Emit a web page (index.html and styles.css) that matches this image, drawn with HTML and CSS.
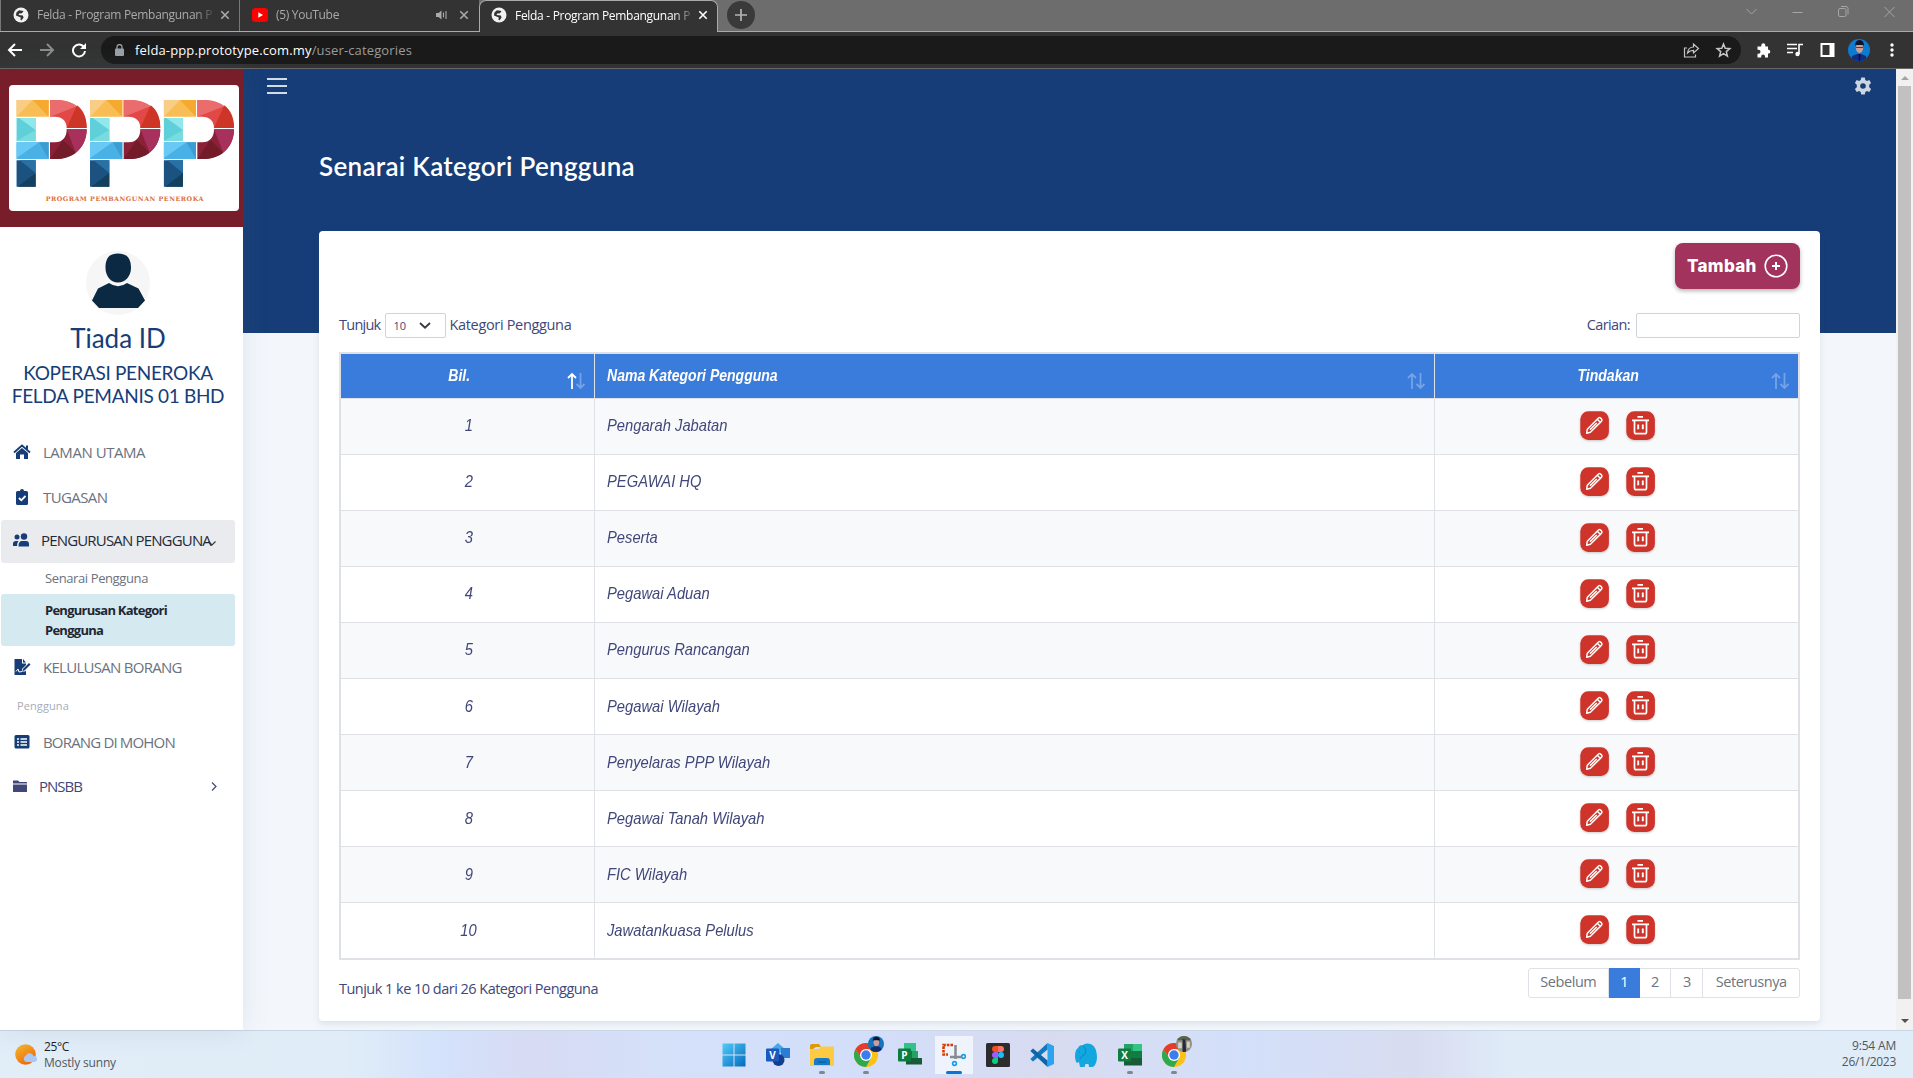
FILE: index.html
```html
<!DOCTYPE html>
<html lang="ms">
<head>
<meta charset="utf-8">
<title>Felda - Program Pembangunan Peneroka</title>
<link rel="stylesheet" href="styles.css">
</head>
<body>
<svg class="defs" width="0" height="0" aria-hidden="true">
  <symbol id="globe" viewBox="0 0 16 16"><circle cx="8" cy="8" r="7.5" fill="#f1f1f1"/><path d="M6 3.2 10.5 4 9 6.2 6.2 6.6 5.5 8 9.8 8.4 10.6 10.4 8.4 13.4 7.4 12.6 7.8 10.6 3 8.4 3.4 5.6z" fill="#333"/></symbol>
  <symbol id="x" viewBox="0 0 10 10"><path d="M1.3 1.3l7.4 7.4M8.7 1.3L1.3 8.7" stroke="currentColor" stroke-width="1.6"/></symbol>
  <symbol id="edit" viewBox="0 0 29 29"><rect x=".3" y=".3" width="28.6" height="28.6" rx="8" fill="#cf342b"/><path d="M6.700 22.200l.6-4L18.500 7q1.100-.9 2.100.1l.9.9q1 1 .1 2.100L10.400 21.300zM17.300 8.300l3 3M10 18.800l6.800-6.800" fill="none" stroke="#fff" stroke-width="1.500" stroke-linejoin="round"/></symbol>
  <symbol id="trash" viewBox="0 0 29 29"><rect x=".3" y=".3" width="28.6" height="28.6" rx="8" fill="#cf342b"/><path d="M6 9.300h17M11.500 5.900h5.500M8.500 9.600v11.400q0 1.700 1.800 1.700h8.400q1.800 0 1.800-1.700V9.600" fill="none" stroke="#fff" stroke-width="1.700"/><path d="M12.200 13.600v4.600M16.800 13.600v4.600" stroke="#fff" stroke-width="1.900"/></symbol>
  <symbol id="sort" viewBox="0 0 18 18"><path d="M5 17V2M1 6l4-4 4 4" fill="none" stroke="#fff" stroke-width="1.8"/><path d="M13.5 1v15M9.5 12l4 4 4-4" fill="none" stroke="#fff" stroke-width="1.8" opacity=".3"/></symbol>
  <symbol id="sortoff" viewBox="0 0 18 18"><path d="M5 17V2M1 6l4-4 4 4M13.5 1v15M9.5 12l4 4 4-4" fill="none" stroke="#fff" stroke-width="1.8" opacity=".3"/></symbol>
  <symbol id="chrome" viewBox="0 0 24 24"><circle cx="12" cy="12" r="12" fill="#fbc116"/><path d="M1.6 6A12 12 0 0 0 12 24L17 15 7 15z" fill="#2da94f"/><path d="M1.6 6A12 12 0 0 1 22.4 6H12L7 15z" fill="#e33b2e"/><circle cx="12" cy="12" r="6" fill="#fff"/><circle cx="12" cy="12" r="4.7" fill="#3b7ded"/></symbol>
  <symbol id="ppp" viewBox="0 0 212 262">
    <path d="M0 0h97v50H0z" fill="#f8bd55"/><path d="M0 0h49L0 50z" fill="#f9cd86"/><path d="M49 0h48v50z" fill="#f5a92e"/>
    <path d="M101 0h15C175 0 211 32 211 84H151C151 62 137 50 116 50H101z" fill="#e24845"/><path d="M101 0h15c30 0 50 6 66 19L101 50z" fill="#ea6c6d"/><path d="M182 16C202 31 211 54 211 84h-60z" fill="#cd3527"/>
    <path d="M0 54h58v69H0z" fill="#5fd0da"/><path d="M8 54h50v36z" fill="#90e7ec"/><path d="M58 90v33H0z" fill="#77dbe0"/>
    <path d="M0 127h97v50H0z" fill="#49b1e6"/><path d="M0 127h68L0 175z" fill="#67c9f4"/><path d="M68 127h29v50z" fill="#3d9dd3"/>
    <path d="M0 181h58v79H0z" fill="#1b5280"/><path d="M10 181h48v38z" fill="#2771a5"/><path d="M58 219v41H4z" fill="#13405f"/>
    <path d="M151 88h60c0 55-40 89-96 89h-14v-50h15c22 0 35-14 35-39z" fill="#8b2138"/><path d="M151 88h60c0 30-12 54-32 70z" fill="#a8305c"/><path d="M140 120l39 38c-16 12-37 19-63 19h-15z" fill="#731b28"/>
  </symbol>
</svg>

<header class="browser">
  <div class="tabs">
    <div class="tab"><svg class="fav"><use href="#globe"/></svg><span class="tt">Felda - Program Pembangunan P</span><svg class="close"><use href="#x"/></svg></div>
    <div class="tab second"><svg class="fav" viewBox="0 0 16 16"><rect y="1" width="16" height="14" rx="3.5" fill="red"/><path d="M6.300 5.300v5.400L11 8z" fill="#fff"/></svg><span class="tt">(5) YouTube</span><svg class="speaker" viewBox="0 0 12 10"><path d="M0 3h2.500L5.500.5v9L2.500 7H0z" fill="#aaa"/><path d="M7.500 2.500v5M10 1v8" stroke="#aaa" stroke-width="1.1"/></svg><svg class="close"><use href="#x"/></svg></div>
    <div class="tab active"><svg class="fav"><use href="#globe"/></svg><span class="tt">Felda - Program Pembangunan P</span><svg class="close"><use href="#x"/></svg></div>
    <div class="newtab"><svg viewBox="0 0 28 28"><circle cx="14" cy="14" r="14" fill="#3a3a3a"/><path d="M14 8v12M8 14h12" stroke="#b5b5b5" stroke-width="1.7"/></svg></div>
    <svg class="wincontrols" viewBox="0 0 150 12" fill="none" stroke="#a5a5a5" stroke-width="1"><path d="M.5 3l5 5 5-5M46.500 6.500h10M95 .5h5q2 0 2 2v6"/><rect x="92.500" y="2.500" width="7.500" height="8" rx="1.500"/><path d="M138.500 1l10 10M148.500 1l-10 10"/></svg>
  </div>
  <div class="toolbar">
    <svg class="nav" viewBox="0 0 80 16" fill="none" stroke-width="2"><path d="M15 8H2M8 2L2 8l6 6" stroke="#fff"/><path d="M33 8h13M40 2l6 6-6 6" stroke="#8c8c8c"/><path d="M76.500 4.500A6 6 0 1 0 78 9" stroke="#fff"/><path d="M79 1v6h-6z" fill="#fff"/></svg>
    <div class="omnibox"><svg class="lock" viewBox="0 0 9 12"><rect y="4.500" width="9" height="7.500" rx="1" fill="#9aa0a6"/><path d="M2 5V3a2.500 2.500 0 0 1 5 0v2" fill="none" stroke="#9aa0a6" stroke-width="1.300"/></svg><span class="url"><b class="host">felda-ppp.prototype.com.my</b><span class="path">/user-categories</span></span>
      <svg class="share" viewBox="0 0 49 16" fill="none" stroke="#c4c7c5" stroke-width="1.200"><path d="M4 6H1.500v9h11v-2.500M4.500 11c.5-4 3-6 6-6V2L15.500 6.500 10.500 11V8.300c-3 0-4.500 1-6 2.700z"/><path d="M40.500 2l1.700 4.300 4.600.3-3.500 3 1.100 4.500-3.900-2.500-3.900 2.500 1.100-4.500-3.500-3 4.600-.3z" stroke-width="1.500"/></svg>
    </div>
    <svg class="ext" viewBox="0 0 80 16"><path d="M13 4.500h-2.700V3.300a2 2 0 0 0-4 0v1.200H2.500v3.300h1a2 2 0 0 1 0 4h-1v3.700h3.700v-1a1.900 1.900 0 0 1 3.800 0v1h3v-4h1a2 2 0 0 0 0-3.700h-1z" fill="#fff"/><path d="M32 2.500h10M32 6.500h10M32 10.500h6" stroke="#fff" stroke-width="1.600"/><path d="M44 12V2.500h4" stroke="#fff" stroke-width="1.600" fill="none"/><circle cx="42.500" cy="12" r="2.200" fill="#fff"/><path d="M65.500 1h14v14h-14zm2 2v10h7V3z" fill="#fff" fill-rule="evenodd"/></svg>
    <svg class="me" viewBox="0 0 22 22"><defs><clipPath id="c"><circle cx="11" cy="11" r="11"/></clipPath></defs><g clip-path="url(#c)"><path d="M0 0h22v22H0z" fill="#0d7bd0"/><path d="M3 22l1-5 5-2h4l5 2 1 5z" fill="#122c82"/><ellipse cx="11.500" cy="9" rx="3.600" ry="5" fill="#c99f9a"/><path d="M7 7q0-6 4.500-6T16 7l-1-1H8z" fill="#111327"/><path d="M8 8.500h7" stroke="#445"/><path d="M10.500 15h2l-.5 7h-1z" fill="#0a1240"/></g></svg>
    <svg class="dots" viewBox="0 0 4 14" fill="#fff"><circle cx="2" cy="2" r="1.700"/><circle cx="2" cy="7" r="1.700"/><circle cx="2" cy="12" r="1.700"/></svg>
  </div>
</header>

<div class="page">
  <aside class="sidebar">
    <div class="brand">
      <svg class="logo" viewBox="27 75 690 378"><rect x="27" y="75" width="690" height="378" rx="12" fill="#fff"/><use href="#ppp" x="49" y="120" width="212" height="262"/><use href="#ppp" x="270" y="120" width="212" height="262"/><use href="#ppp" x="491" y="120" width="212" height="262"/><text x="137" y="424" textLength="473" class="slogan">PROGRAM PEMBANGUNAN PENEROKA</text></svg>
    </div>
    <div class="profile">
      <svg class="avatar" viewBox="0 0 64 64"><circle cx="32" cy="32" r="32" fill="#f6f6f6"/><path d="M32 2.500c10 0 13 6 13 14.500S39 31.500 32 31.500 19.500 25.500 19.500 17 22 2.500 32 2.500zM23 32q9 6.500 18 0l11.500 5.500 6.500 12-7 7.500H13l-7-7.500 6-12z" fill="#0b2942"/></svg>
      <div class="uid">Tiada ID</div>
      <div class="org">KOPERASI PENEROKA<br>FELDA PEMANIS 01 BHD</div>
    </div>
    <nav class="menu">
      <a class="item i1"><svg viewBox="0 0 18 16"><path d="M9 4l6 5v6h-4v-4.500H7V15H3V9z"/><path d="M1 8.500l8-7 8 7" fill="none" stroke="#163d77" stroke-width="1.800"/><path d="M13 1.500h2V5h-2z"/></svg><span>LAMAN UTAMA</span></a>
      <a class="item i2"><svg viewBox="0 0 18 16"><path d="M4.500 2H7a2 2 0 0 1 4 0h2.500q1.500 0 1.500 1.500v11q0 1.500-1.500 1.500h-9Q3 16 3 14.500v-11Q3 2 4.500 2z"/><path d="M6 9l2.300 2.300L12.500 7" fill="none" stroke="#fff" stroke-width="1.800"/></svg><span>TUGASAN</span></a>
      <a class="item open"><svg viewBox="0 0 18 16"><circle cx="5" cy="5" r="2.500"/><circle cx="12" cy="4.500" r="3.200"/><path d="M1 14v-2.500Q1 9 4 9h2.500Q5 10.500 5 14zM6.500 14.500Q6.500 9 10 9h4q3 0 3 3v2.500z"/></svg><span>PENGURUSAN PENGGUNA</span><svg class="caret" viewBox="0 0 8 5"><path d="M.5.5L4 4 7.500.5" fill="none" stroke="#333" stroke-width="1.100"/></svg></a>
      <a class="sub">Senarai Pengguna</a>
      <a class="sub current">Pengurusan Kategori<br>Pengguna</a>
      <a class="item i3"><svg viewBox="0 0 18 16"><path d="M1.500 0H9v4.500h4V6L9 10v2.500h3l1-1V16H1.500z"/><path d="M10 0l3 3.500h-3z"/><path d="M9.500 12l.5-2L16 4l1.500 1.500-6 6z"/><path d="M3 12.500l2-2.500 1 3 3-.5" fill="none" stroke="#fff"/></svg><span>KELULUSAN BORANG</span></a>
      <div class="group">Pengguna</div>
      <a class="item i4"><svg viewBox="0 0 18 16"><rect x="1.500" y="1" width="15" height="13.500" rx="1.500"/><path d="M4 5h2M7.500 5H14M4 8h2M7.500 8H14M4 11h2M7.500 11H14" stroke="#fff" stroke-width="1.500"/></svg><span>BORANG DI MOHON</span></a>
      <a class="item i5"><svg viewBox="0 0 18 16"><path d="M1 2.500h5L7.500 4H15v1.500H1zM1 6.500h14V14H1z" fill="#414779"/></svg><span>PNSBB</span><svg class="chev" viewBox="0 0 6 9"><path d="M1 .5l4 4-4 4" fill="none" stroke="#414779" stroke-width="1.200"/></svg></a>
    </nav>
  </aside>

  <main class="main">
    <div class="topbar">
      <svg class="burger" viewBox="0 0 20 16"><path d="M0 1h20M0 8h20M0 15h20" stroke="#d3dbe6" stroke-width="1.800"/></svg>
      <svg class="gear" viewBox="0 0 18 18"><path d="M7.200.5h3.600l.5 2.500 1.600.9 2.400-.8 1.800 3-1.900 1.700v2.400l1.900 1.700-1.800 3-2.400-.8-1.600.9-.5 2.500H7.200L6.700 15l-1.600-.9-2.400.8-1.800-3 1.900-1.700V7.800L.9 6.100l1.800-3 2.400.8L6.700 3zM9 6.200a2.800 2.800 0 1 0 0 5.600 2.800 2.800 0 0 0 0-5.600z" fill="#ccd5e2" fill-rule="evenodd"/></svg>
    </div>
    <h1>Senarai Kategori Pengguna</h1>
    <section class="card">
      <button class="add"><span>Tambah</span><svg viewBox="0 0 24 24" fill="none" stroke="#fff"><circle cx="12" cy="12" r="10.800" stroke-width="1.600"/><path d="M12 8v8M8 12h8" stroke-width="2"/></svg></button>
      <div class="controls">
        <label><span class="tight">Tunjuk</span><span class="select"><span>10</span><svg viewBox="0 0 12 7"><path d="M1 1l5 4.700L11 1" fill="none" stroke="#343a40" stroke-width="1.800"/></svg></span><span class="what">Kategori Pengguna</span></label>
        <label class="find"><span class="tight">Carian:</span><input type="text"></label>
      </div>
      <table>
        <colgroup><col class="k1"><col class="k2"><col class="k3"></colgroup>
        <thead><tr><th><span>Bil.</span><svg class="sort"><use href="#sort"/></svg></th><th class="name"><span>Nama Kategori Pengguna</span><svg class="sort"><use href="#sortoff"/></svg></th><th><span>Tindakan</span><svg class="sort"><use href="#sortoff"/></svg></th></tr></thead>
        <tbody>
          <tr><td><span>1</span></td><td class="name"><span>Pengarah Jabatan</span></td><td><svg class="act"><use href="#edit"/></svg><svg class="act"><use href="#trash"/></svg></td></tr>
          <tr><td><span>2</span></td><td class="name"><span>PEGAWAI HQ</span></td><td><svg class="act"><use href="#edit"/></svg><svg class="act"><use href="#trash"/></svg></td></tr>
          <tr><td><span>3</span></td><td class="name"><span>Peserta</span></td><td><svg class="act"><use href="#edit"/></svg><svg class="act"><use href="#trash"/></svg></td></tr>
          <tr><td><span>4</span></td><td class="name"><span>Pegawai Aduan</span></td><td><svg class="act"><use href="#edit"/></svg><svg class="act"><use href="#trash"/></svg></td></tr>
          <tr><td><span>5</span></td><td class="name"><span>Pengurus Rancangan</span></td><td><svg class="act"><use href="#edit"/></svg><svg class="act"><use href="#trash"/></svg></td></tr>
          <tr><td><span>6</span></td><td class="name"><span>Pegawai Wilayah</span></td><td><svg class="act"><use href="#edit"/></svg><svg class="act"><use href="#trash"/></svg></td></tr>
          <tr><td><span>7</span></td><td class="name"><span>Penyelaras PPP Wilayah</span></td><td><svg class="act"><use href="#edit"/></svg><svg class="act"><use href="#trash"/></svg></td></tr>
          <tr><td><span>8</span></td><td class="name"><span>Pegawai Tanah Wilayah</span></td><td><svg class="act"><use href="#edit"/></svg><svg class="act"><use href="#trash"/></svg></td></tr>
          <tr><td><span>9</span></td><td class="name"><span>FIC Wilayah</span></td><td><svg class="act"><use href="#edit"/></svg><svg class="act"><use href="#trash"/></svg></td></tr>
          <tr><td><span>10</span></td><td class="name"><span>Jawatankuasa Pelulus</span></td><td><svg class="act"><use href="#edit"/></svg><svg class="act"><use href="#trash"/></svg></td></tr>
        </tbody>
      </table>
      <div class="foot">
        <div class="info">Tunjuk 1 ke 10 dari 26 Kategori Pengguna</div>
        <div class="pager"><a class="p1">Sebelum</a><a class="on">1</a><a>2</a><a>3</a><a class="p5">Seterusnya</a></div>
      </div>
    </section>
  </main>
  <div class="scroll"><i class="up"></i><div class="thumb"></div><i class="down"></i></div>
</div>

<footer class="taskbar">
  <div class="weather"><svg viewBox="0 0 23 22"><defs><linearGradient id="s" x2=".6" y2="1"><stop stop-color="#f3bd2f"/><stop offset="1" stop-color="#f0680c"/></linearGradient></defs><circle cx="10.500" cy="10.500" r="10.300" fill="url(#s)"/><path d="M11 18a3.500 3.500 0 0 1 0-6.500 4 4 0 0 1 7.500.5 3 3 0 0 1 1 6z" fill="#a9c8f5"/></svg><div><span class="temp">25°C</span><br><span class="sky">Mostly sunny</span></div></div>
  <div class="apps">
    <div class="app"><svg viewBox="0 0 24 24"><defs><linearGradient id="w" x2="1" y2="1"><stop stop-color="#4fcdf7"/><stop offset="1" stop-color="#0669bd"/></linearGradient></defs><path d="M.5.5h11v11H.5zM12.5.5h11v11h-11zM.5 12.500h11v11H.5zM12.500 12.500h11v11h-11z" fill="url(#w)"/></svg></div>
    <div class="app"><svg viewBox="0 0 24 24"><path d="M12 0l7 6-7 6-7-6z" fill="#48a8e5"/><path d="M15 5h9v10h-9z" fill="#2b7cd3"/><circle cx="12.500" cy="17" r="6" fill="#143d8c"/><rect x="0" y="5.500" width="13" height="13" rx="1" fill="#1a59c0"/><text x="6.500" y="15.500" class="glyph">V</text></svg></div>
    <div class="app run"><svg viewBox="0 0 24 24"><path d="M0 3q0-2 2-2h7l2 3h-5L0 8z" fill="#dd9a05"/><path d="M0 6h9l2-2.500h13V23H0z" fill="#fdcb43"/><path d="M4 22v-4q0-3 3-3h10q3 0 3 3v4z" fill="#1879c9"/><path d="M8 19h8" stroke="#0b568f"/></svg></div>
    <div class="app run"><svg viewBox="0 0 24 24"><use href="#chrome"/></svg><svg class="badge" viewBox="0 0 22 22"><g clip-path="url(#c)"><path d="M0 0h22v22H0z" fill="#1574bd"/><path d="M3 22l1-6 5-2h4l5 2 1 6z" fill="#142b70"/><ellipse cx="11.500" cy="9" rx="3.800" ry="5" fill="#c99f9a"/><path d="M6.500 7q0-6 5-6t5 6l-1-1h-8z" fill="#111327"/></g></svg></div>
    <div class="app"><svg viewBox="0 0 24 24"><path d="M6 0h12v8H6z" fill="#31c289"/><path d="M10 8h10v8H10z" fill="#21a366"/><path d="M8 15h16v6.500H8z" fill="#185c37"/><path d="M8 8h6v7H8z" fill="#107c41"/><rect y="5.500" width="13" height="13" rx="1" fill="#0f7b3f"/><text x="6.500" y="15.500" class="glyph">P</text></svg></div>
    <div class="app sel"><svg viewBox="0 0 24 24" fill="none"><path d="M11 2H1.500v9.500H6" stroke="#d83b01" stroke-width="2.600" stroke-dasharray="2.600 1"/><path d="M13.500 2v14M8 14h11" stroke="#858b92" stroke-width="2.500"/><circle cx="21.500" cy="13.500" r="1.900" stroke="#1b9de2" stroke-width="1.600"/><circle cx="12.500" cy="20.500" r="1.900" stroke="#1b9de2" stroke-width="1.600"/></svg></div>
    <div class="app"><svg viewBox="0 0 24 24"><rect width="24" height="24" rx="1.500" fill="#2c2c2c"/><path d="M12 3H9a3 3 0 0 0 0 6h3z" fill="#f24e1e"/><path d="M12 3h3a3 3 0 0 1 0 6h-3z" fill="#ff7262"/><path d="M12 9H9a3 3 0 0 0 0 6h3z" fill="#a259ff"/><circle cx="15" cy="12" r="3" fill="#1abcfe"/><path d="M12 15H9a3 3 0 1 0 3 3z" fill="#0acf83"/></svg></div>
    <div class="app"><svg viewBox="0 0 24 24"><path d="M17.500 0L24 3v18l-6.500 3z" fill="#2ba3ee"/><path d="M17.500 0v6.500L3 18.500.3 16z" fill="#1379be"/><path d="M17.500 24v-6.500L3 5.500.3 8z" fill="#0b67a8"/></svg></div>
    <div class="app"><svg viewBox="0 0 24 24"><path d="M1 13q0-6 3-8 1-3 5-3 2-2 5-1.500 7 .5 8.500 9Q24 17 21 22q-1 2-3 2h-3l-.500-3h-3l-1 3H6l-1-5-2 1q-2-2-2-7z" fill="#12a7df"/><path d="M9 3q5 4 1 9-3 1-4 4M5 9h1" stroke="#0a86bd" fill="none"/></svg></div>
    <div class="app run"><svg viewBox="0 0 24 24"><path d="M6 1h18v7H6z" fill="#21a366"/><path d="M15 1h9v7h-9z" fill="#33c481"/><path d="M6 8h18v7H6z" fill="#107c41"/><path d="M6 15h18v7.500H6z" fill="#185c37"/><rect y="5.500" width="13" height="13" rx="1" fill="#107c41"/><text x="6.500" y="15.500" class="glyph">X</text></svg></div>
    <div class="app run"><svg viewBox="0 0 24 24"><use href="#chrome"/></svg><svg class="badge" viewBox="0 0 22 22"><g clip-path="url(#c)"><path d="M0 0h22v22H0z" fill="#8f9183"/><path d="M0 0h22v6H0z" fill="#59634b"/><path d="M3 9h5v8H3zM15 8h4v8h-4z" fill="#d5d1ca"/><path d="M9 4l4 1 1 17H9z" fill="#27283a"/></g></svg></div>
  </div>
  <div class="clock"><span class="time">9:54 AM</span><br><span class="date">26/1/2023</span></div>
</footer>
</body>
</html>
```
FILE: styles.css
```css
* { box-sizing: border-box; }
body { margin: 0; width: 1913px; height: 1078px; overflow: hidden; display: flex; flex-direction: column; font-family: "Open Sans", sans-serif; font-size: 14.5px; color: #414779; }
svg { display: block; flex: none; }
.defs { position: absolute; }

/* Browser chrome */
.browser { height: 69px; background: #333; border-bottom: 1px solid #666; flex: none; font-size: 12px; }
.tabs { height: 32px; background: #6d6d6d; display: flex; border-bottom: 1px solid #aaa; }
.tab { width: 239px; height: 31px; padding: 0 9px 2px 12px; background: #333; color: #aaa; display: flex; align-items: center; border-left: 1px solid #777; white-space: nowrap; overflow: hidden; }
.fav { width: 16px; height: 16px; margin-right: 8px; }
.tt { width: 177px; flex: none; overflow: hidden; letter-spacing: -.3px; -webkit-mask-image: linear-gradient(90deg, #000 158px, transparent 180px); mask-image: linear-gradient(90deg, #000 158px, transparent 180px); }
.close { width: 10px; height: 10px; margin-left: auto; }
.second { width: 240px; padding-right: 10px; }
.second .tt { width: 100px; }
.speaker { width: 12px; height: 10px; margin-left: auto; }
.speaker + .close { margin-left: 11px; }
.tab.active { height: 32px; padding: 0 9px 3px 11px; color: #fff; border: 1px solid #aaa; border-bottom: 0; border-radius: 7px 7px 0 0; margin-bottom: -1px; }
.newtab { padding: 1px 0 0 9px; }
.newtab svg { width: 28px; height: 28px; }
.wincontrols { width: 150px; height: 12px; margin: 6px 17px 0 auto; }
.toolbar { height: 36px; display: flex; align-items: center; }
.nav { width: 80px; height: 16px; margin-left: 7px; }
.omnibox { width: 1640px; height: 28px; margin-left: 14px; border-radius: 14px; background: #1a1a1a; display: flex; align-items: center; padding: 0 9px 0 14px; }
.lock { width: 9px; height: 12px; margin-right: 11px; }
.url { font-size: 13px; white-space: nowrap; letter-spacing: .14px; }
.host { color: #fff; font-weight: 400; }
.path { color: #9a9a9a; }
.share { width: 49px; height: 16px; margin-left: auto; }
.ext { width: 80px; height: 16px; margin-left: 14px; }
.me { width: 22px; height: 22px; margin-left: 13px; }
.dots { width: 4px; height: 14px; margin-left: 20px; }

/* Sidebar */
.page { height: 961px; display: flex; flex: none; background: #f3f7fc; }
.sidebar { width: 243px; background: #fff; flex: none; z-index: 1; box-shadow: 0 0 25px rgba(100, 120, 140, .14); }
.brand { height: 158px; background: #771e2a; padding: 16px 0 0 9px; }
.logo { width: 230px; height: 126px; }
.slogan { font: bold 19px "DejaVu Serif", serif; fill: #df6b35; }
.profile { color: #163d77; text-align: center; width: 236px; font-family: Lato, sans-serif; }
.avatar { width: 64px; height: 64px; margin: 24px auto 0; }
.uid { font-size: 26px; line-height: 32px; margin-top: 7px; white-space: nowrap; }
.org { font-size: 19px; line-height: 23px; margin-top: 7px; white-space: nowrap; letter-spacing: -.31px; }
.menu { margin-top: 23px; padding-left: 1px; width: 235px; color: #6b7280; font-size: 15px; white-space: nowrap; }
.item { display: flex; align-items: center; height: 44px; padding-left: 12px; }
.item svg { width: 18px; height: 16px; fill: #163d77; margin-right: 12px; }
.i1 span { letter-spacing: -.47px; }
.i2 span { letter-spacing: -.6px; }
.i2 { height: 46px; padding-bottom: 1px; }
.item.open { height: 43px; background: #e9ebee; border-radius: 3px; color: #212a38; position: relative; padding: 0 0 3px 11px; letter-spacing: -.83px; }
.item.open svg:first-child { margin-right: 11px; }
.item .caret { position: absolute; left: 207px; top: 21px; width: 8px; height: 5px; margin: 0; }
.sub { display: block; height: 31px; line-height: 31px; padding-left: 44px; font-size: 13px; letter-spacing: -.39px; }
.sub.current { height: 52px; line-height: 20px; padding-top: 6px; background: #d5e9f0; border-radius: 3px; color: #1f2733; font-weight: 700; letter-spacing: -.74px; }
.i3 { padding-bottom: 2px; letter-spacing: -.72px; }
.group { height: 32px; line-height: 32px; padding-left: 16px; font-size: 11px; color: #a6adb8; letter-spacing: .1px; }
.item.i4 { height: 42px; padding-bottom: 2px; letter-spacing: -.83px; }
.item.i5 { height: 45px; padding: 0 0 2px 11px; color: #414779; letter-spacing: -.99px; }
.item.i5 svg:first-child { margin-right: 9px; }
.item .chev { width: 6px; height: 9px; margin: 1px 18px 0 auto; }

/* Main column */
.main { flex: 1; background: linear-gradient(#163d77 264px, transparent 264px); padding: 0 76px; }
.topbar { height: 34px; margin: 0 -52px; display: flex; justify-content: space-between; align-items: center; }
.burger { width: 20px; height: 16px; }
.gear { width: 18px; height: 18px; }
h1 { margin: 46px 0 47px; height: 35px; font: 600 26px/35px Lato, sans-serif; letter-spacing: .3px; color: #fff; white-space: nowrap; }
.card { height: 790px; background: #fff; border-radius: 4px; padding: 12px 20px 0; box-shadow: 0 3px 6px rgba(60, 80, 110, .12); display: flex; flex-direction: column; }
.add { align-self: flex-end; width: 125px; height: 46px; border: 0; border-radius: 8px; background: #a1335c; color: #fff; font: 800 17px Inter, sans-serif; letter-spacing: .3px; display: flex; align-items: center; padding: 0 12px; justify-content: space-between; box-shadow: 0 2px 4px rgba(0, 0, 0, .3); flex: none; }
.add span { padding-bottom: 1px; }
.add svg { width: 24px; height: 24px; }
.controls { display: flex; justify-content: space-between; margin-top: 24px; height: 25px; }
label { display: flex; align-items: center; white-space: nowrap; }
.tight { letter-spacing: -.75px; padding-bottom: 2px; }
.find .tight { letter-spacing: -.6px; }
.what { letter-spacing: -.33px; padding-bottom: 2px; }
.select { width: 61px; height: 25px; border: 1px solid #ced4da; border-radius: 2px; margin: 0 3px 0 5px; padding: 0 14px 0 7px; display: flex; align-items: center; justify-content: space-between; font-size: 11px; }
.select svg { width: 12px; height: 7px; }
.find input { width: 164px; height: 25px; border: 1px solid #ced4da; border-radius: 2px; margin: 0 0 0 6px; padding: 0; }

table { margin-top: 14px; width: 1461px; height: 608px; table-layout: fixed; border-collapse: collapse; border: 2px solid #dee2e6; font: italic 17px "Liberation Sans", sans-serif; flex: none; color: #414779; }
.k1 { width: 254px; }
.k2 { width: 840px; }
th, td { border: 1px solid #dee2e6; padding: 0; text-align: center; white-space: nowrap; }
th { position: relative; background: #3a7cdc; color: #fff; height: 45px; padding-right: 17px; }
td { height: 56px; }
td span, th span { display: inline-block; transform: scaleX(.867); }
th span { transform: scaleX(.825); }
td:first-child { padding-left: 2px; }
td.name, th.name { text-align: left; padding-left: 12px; }
.name span { transform-origin: left; }
tbody tr:nth-child(odd) { background: #f8f9fb; }
.sort { position: absolute; right: 9px; bottom: 8px; width: 18px; height: 18px; }
td .act { display: inline-block; vertical-align: middle; width: 29px; height: 29px; margin: -2px 0 0 2px; filter: drop-shadow(0 1px 1px rgba(0, 0, 0, .2)); }
td .act + .act { margin-left: 17px; }

.foot { display: flex; justify-content: space-between; margin-top: 8px; }
.info { padding-top: 11px; white-space: nowrap; letter-spacing: -.52px; }
.pager { display: flex; height: 30px; border: 1px solid #dee2e6; border-radius: 3px; color: #6c757d; width: 272px; letter-spacing: -.44px; }
.pager a { width: 32px; border-right: 1px solid #dee2e6; line-height: 26px; text-align: center; }
.pager .p1 { width: 80px; }
.pager .p5 { width: 96px; border: 0; }
.pager .on { width: 31px; background: #3a7cdc; color: #fff; margin: -1px 0; line-height: 28px; border: 0; }
.scroll { width: 17px; background: #f1f1f1; display: flex; flex-direction: column; align-items: center; }
.scroll i { border: 4px solid transparent; height: 0; }
.scroll .up { border-bottom-color: #a3a3a3; border-top: 0; margin-top: 7px; }
.thumb { width: 13px; height: 913px; margin-top: 6px; background: #c1c1c1; }
.scroll .down { border-top-color: #505050; border-bottom: 0; margin-top: 20px; }

/* Taskbar */
.taskbar { height: 48px; flex: none; display: flex; justify-content: space-between; border-top: 1px solid #c9d6e6; background: linear-gradient(90deg, #e1edf7, #e0edf8 18%, #d4e2fb 23%, #d7dbf3 28%, #d5e0f9 34%, #d3defa 45%, #d8dbf0 55%, #d3e0fa 65%, #d8dcf0 74%, #dfecf8 79%, #dfedf9); font-size: 12px; line-height: 16px; color: #50575f; }
.weather { width: 400px; display: flex; padding: 8px 0 0 15px; white-space: nowrap; }
.weather svg { width: 23px; height: 22px; margin: 5px 6px 0 0; }
.temp { color: #1c1f24; letter-spacing: -.36px; }
.sky { letter-spacing: -.17px; }
.apps { display: flex; height: 47px; align-items: center; margin-left: -5px; }
.app { width: 44px; height: 47px; display: flex; align-items: center; justify-content: center; position: relative; }
.app svg { width: 24px; height: 24px; margin-top: 0; }
.app svg.badge { position: absolute; width: 16px; height: 16px; left: 24px; top: 5px; margin: 0; }
.app.sel { background: linear-gradient(#eff3fb, #eff3fb) center / 38px 38px no-repeat; }
.run::after, .sel::after { content: ""; position: absolute; bottom: 4px; left: 19px; width: 6px; height: 3px; border-radius: 2px; background: #81868f; }
.sel::after { left: 14px; width: 16px; background: #0a74d4; }
.glyph { font: bold 10px "Open Sans", sans-serif; fill: #fff; text-anchor: middle; }
.clock { width: 400px; text-align: right; padding: 7px 17px 0 0; }
.time { letter-spacing: -.18px; }
.date { letter-spacing: -.3px; }
```
